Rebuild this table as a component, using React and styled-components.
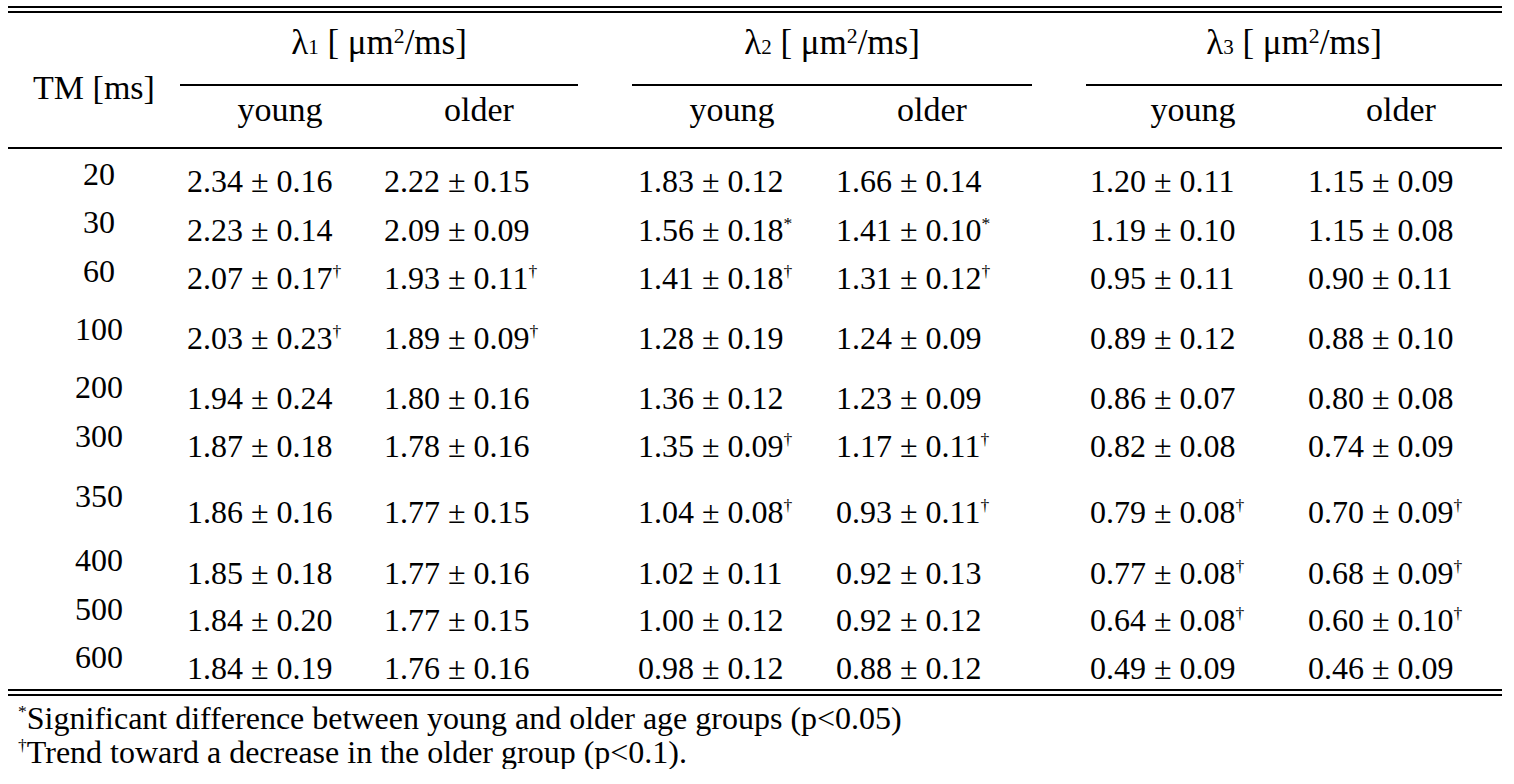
import styled, { createGlobalStyle } from "styled-components";

const GlobalStyle = createGlobalStyle`
  html, body {
    margin: 0;
    padding: 0;
    background: #fff;
  }
  body {
    font-family: "Liberation Serif", "Times New Roman", serif;
    color: #000;
  }
`;

const COLS = "172px 200px 198px 54px 200px 200px 54px 214px 202px";

const Page = styled.div`
  width: 1494px;
  padding: 6px 0 0 8px;
`;

const Table = styled.div`
  border-top: 7px double #000;
  border-bottom: 7px double #000;
`;

const Head = styled.div`
  display: grid;
  grid-template-columns: ${COLS};
  grid-template-rows: 73px 61px;
  border-bottom: 2px solid #000;
  font-size: 34px;
  line-height: 36px;
`;

const TmHead = styled.div`
  grid-column: 1;
  grid-row: 1 / span 2;
  padding-top: 57px;
  text-align: center;
`;

const GroupTitle = styled.div`
  grid-column: ${(p) => p.$col} / span 2;
  grid-row: 1;
  border-bottom: 2px solid #000;
  padding-top: 12px;
  text-align: center;
  font-size: 35px;
`;

const SubHead = styled.div`
  grid-column: ${(p) => p.$col};
  grid-row: 2;
  padding-top: 6px;
  text-align: center;
`;

const Small = styled.span`
  font-size: 0.6em;
`;

const Sup = styled.sup`
  font-size: ${(p) => (p.$big ? "0.62em" : "0.55em")};
  line-height: 0;
  vertical-align: ${(p) => (p.$big ? "0.5em" : "0.7em")};
`;

const Body = styled.div`
  padding-top: 7px;
`;

const Row = styled.div`
  display: grid;
  grid-template-columns: ${COLS};
  height: ${(p) => p.$h}px;
  font-size: 32px;
  line-height: 36px;
`;

const TmCell = styled.div`
  text-align: center;
  padding-left: 10px;
`;

const Value = styled.div`
  padding-top: ${(p) => p.$off}px;
  padding-left: ${(p) => p.$left}px;
  white-space: nowrap;
`;

const Gap = styled.div``;

const Notes = styled.div`
  padding: 5px 0 0 10px;
  font-size: 32px;
  line-height: 34px;
`;

const Note = styled.div``;

const LEFTS = [7, 4, 6, 4, 4, 8];

const rows = [
  { tm: "20", h: 48, off: 7, v: ["2.34 ± 0.16", "2.22 ± 0.15", "1.83 ± 0.12", "1.66 ± 0.14", "1.20 ± 0.11", "1.15 ± 0.09"] },
  { tm: "30", h: 49, off: 8, v: ["2.23 ± 0.14", "2.09 ± 0.09", "1.56 ± 0.18*", "1.41 ± 0.10*", "1.19 ± 0.10", "1.15 ± 0.08"] },
  { tm: "60", h: 58, off: 7, v: ["2.07 ± 0.17†", "1.93 ± 0.11†", "1.41 ± 0.18†", "1.31 ± 0.12†", "0.95 ± 0.11", "0.90 ± 0.11"] },
  { tm: "100", h: 58, off: 9, v: ["2.03 ± 0.23†", "1.89 ± 0.09†", "1.28 ± 0.19", "1.24 ± 0.09", "0.89 ± 0.12", "0.88 ± 0.10"] },
  { tm: "200", h: 49, off: 11, v: ["1.94 ± 0.24", "1.80 ± 0.16", "1.36 ± 0.12", "1.23 ± 0.09", "0.86 ± 0.07", "0.80 ± 0.08"] },
  { tm: "300", h: 60, off: 10, v: ["1.87 ± 0.18", "1.78 ± 0.16", "1.35 ± 0.09†", "1.17 ± 0.11†", "0.82 ± 0.08", "0.74 ± 0.09"] },
  { tm: "350", h: 64, off: 16, v: ["1.86 ± 0.16", "1.77 ± 0.15", "1.04 ± 0.08†", "0.93 ± 0.11†", "0.79 ± 0.08†", "0.70 ± 0.09†"] },
  { tm: "400", h: 49, off: 13, v: ["1.85 ± 0.18", "1.77 ± 0.16", "1.02 ± 0.11", "0.92 ± 0.13", "0.77 ± 0.08†", "0.68 ± 0.09†"] },
  { tm: "500", h: 48, off: 11, v: ["1.84 ± 0.20", "1.77 ± 0.15", "1.00 ± 0.12", "0.92 ± 0.12", "0.64 ± 0.08†", "0.60 ± 0.10†"] },
  { tm: "600", h: 50, off: 11, v: ["1.84 ± 0.19", "1.76 ± 0.16", "0.98 ± 0.12", "0.88 ± 0.12", "0.49 ± 0.09", "0.46 ± 0.09"] },
];

// split a trailing * or † off into a superscript
const Num = ({ text }) => {
  const last = text.slice(-1);
  if (last === "*" || last === "†") {
    return (
      <>
        {text.slice(0, -1)}
        <Sup>{last}</Sup>
      </>
    );
  }
  return text;
};

const Title = ({ n }) => (
  <>
    λ<Small>{n}</Small> [ μm<Sup $big>2</Sup>/ms]
  </>
);

const App = () => {
  return (
    <>
      <GlobalStyle />
      <Page>
        <Table>
          <Head>
            <TmHead>TM [ms]</TmHead>
            <GroupTitle $col={2}><Title n="1" /></GroupTitle>
            <GroupTitle $col={5}><Title n="2" /></GroupTitle>
            <GroupTitle $col={8}><Title n="3" /></GroupTitle>
            <SubHead $col={2}>young</SubHead>
            <SubHead $col={3}>older</SubHead>
            <SubHead $col={5}>young</SubHead>
            <SubHead $col={6}>older</SubHead>
            <SubHead $col={8}>young</SubHead>
            <SubHead $col={9}>older</SubHead>
          </Head>
          <Body>
            {rows.map((r) => (
              <Row key={r.tm} $h={r.h}>
                <TmCell>{r.tm}</TmCell>
                <Value $off={r.off} $left={LEFTS[0]}><Num text={r.v[0]} /></Value>
                <Value $off={r.off} $left={LEFTS[1]}><Num text={r.v[1]} /></Value>
                <Gap />
                <Value $off={r.off} $left={LEFTS[2]}><Num text={r.v[2]} /></Value>
                <Value $off={r.off} $left={LEFTS[3]}><Num text={r.v[3]} /></Value>
                <Gap />
                <Value $off={r.off} $left={LEFTS[4]}><Num text={r.v[4]} /></Value>
                <Value $off={r.off} $left={LEFTS[5]}><Num text={r.v[5]} /></Value>
              </Row>
            ))}
          </Body>
        </Table>
        <Notes>
          <Note><Sup>*</Sup>Significant difference between young and older age groups (p&lt;0.05)</Note>
          <Note><Sup>†</Sup>Trend toward a decrease in the older group (p&lt;0.1).</Note>
        </Notes>
      </Page>
    </>
  );
};

export default App;
